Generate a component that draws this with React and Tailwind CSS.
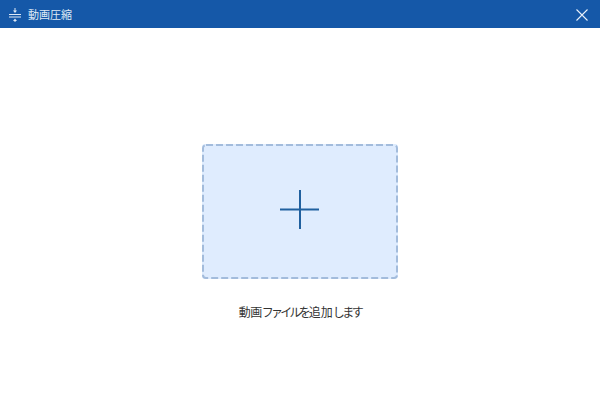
export default function App() {
  return (
    <div className="w-[600px] h-[404px] bg-white flex flex-col overflow-hidden font-['Noto_Sans_CJK_JP',sans-serif]">
      <header className="h-7 shrink-0 bg-[#1558a8] flex items-center justify-between pl-[9px] pr-[12px] text-[#dfe9f5]">
        <div className="flex items-center gap-[7px]">
          <svg width="12" height="14" viewBox="0 0 12 14" fill="none" stroke="currentColor" className="mt-[1px]">
            <path d="M0 6.5H12M0 9H12" />
            <path d="M6 0V3" />
            <path d="M4 2.5H8L6 5Z" fill="currentColor" stroke="none" />
            <path d="M6 15.5V12" />
            <path d="M4 13H8L6 10.5Z" fill="currentColor" stroke="none" />
          </svg>
          <span className="text-[11px] leading-none">動画圧縮</span>
        </div>
        <svg width="12" height="12" viewBox="0 0 12 12" fill="none" stroke="#e8f0fa" strokeWidth="1.1" className="mt-[1px]">
          <path d="M0.5 0.5L11.5 11.5M11.5 0.5L0.5 11.5" />
        </svg>
      </header>
      <main className="flex flex-col items-center pt-[116px]">
        <div className="relative w-[196px] h-[135px] bg-[#dfecfe] rounded-[3px] flex items-center justify-center pb-1">
          <svg className="absolute inset-0" width="196" height="135" fill="none" stroke="#a3bcdc" strokeWidth="2" strokeDasharray="7 3">
            <rect x="1" y="1" width="194" height="133" rx="3" />
          </svg>
          <svg width="40" height="40" viewBox="0 0 40 40" stroke="#20609f" strokeWidth="2">
            <path d="M0 19.5H39M20 0V39" />
          </svg>
        </div>
        <p className="mt-[24px] text-[12px] leading-[18px] text-[#333333]">
          <span className="tracking-[-0.5px]">動画</span>
          <span className="tracking-[-2.8px]">ファイル</span>
          <span className="tracking-[-2px]">を</span>
          <span>追加</span>
          <span className="tracking-[-2.5px]">します</span>
        </p>
      </main>
    </div>
  );
}
